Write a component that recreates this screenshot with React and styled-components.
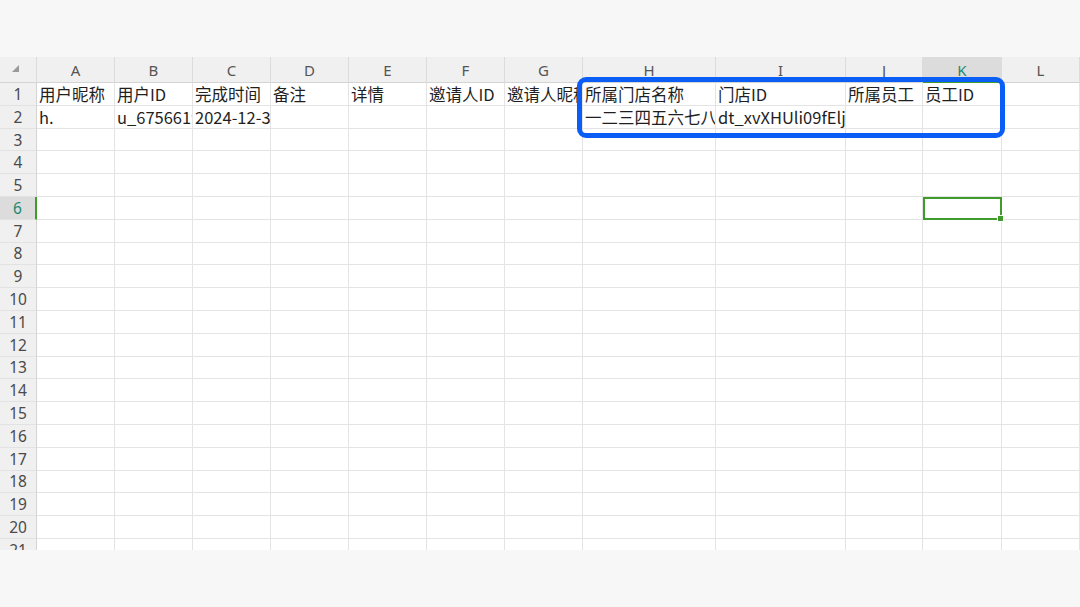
import React from 'react'
import styled, { createGlobalStyle } from 'styled-components'

const GlobalStyle = createGlobalStyle`
  html, body {
    margin: 0;
    padding: 0;
    background: #f7f7f7;
  }
  body {
    font-family: "Noto Sans CJK SC", "Noto Sans", sans-serif;
  }
`

const COLS = [
  { key: 'A', width: 78 },
  { key: 'B', width: 78 },
  { key: 'C', width: 78 },
  { key: 'D', width: 78 },
  { key: 'E', width: 78 },
  { key: 'F', width: 78 },
  { key: 'G', width: 78 },
  { key: 'H', width: 133 },
  { key: 'I', width: 130 },
  { key: 'J', width: 77 },
  { key: 'K', width: 79 },
  { key: 'L', width: 78 }
]

const DATA = {
  1: ['用户昵称', '用户ID', '完成时间', '备注', '详情', '邀请人ID', '邀请人昵称', '所属门店名称', '门店ID', '所属员工', '员工ID', ''],
  2: ['h.', 'u_67566190a1b2c', '2024-12-30 14:22:05', '', '', '', '', '一二三四五六七八九十', 'dt_xvXHUli09fEljp', '', '', '']
}

const ROW_COUNT = 21
const ROW_H = 22.8
const ACTIVE_COL = 'K'
const ACTIVE_ROW = 6

const Page = styled.div`
  padding-top: 57px;
`

const Sheet = styled.div`
  position: relative;
  height: 493px;
  overflow: hidden;
  display: grid;
  grid-template-columns: 37px ${COLS.map(c => c.width + 'px').join(' ')};
  grid-template-rows: 26px repeat(${ROW_COUNT}, ${ROW_H}px);
  background: #ffffff;
`

const Corner = styled.div`
  background: #f0f0f0;
  border-right: 1px solid #dcdcdc;
  border-bottom: 1px solid #d4d4d4;
  display: flex;
  align-items: flex-end;
  justify-content: flex-end;
  padding: 0 17px 10px 0;
  box-sizing: border-box;
`

const ColHead = styled.div`
  background: ${p => (p.$active ? '#dcdcdc' : '#f0f0f0')};
  color: ${p => (p.$active ? '#1d8a6e' : '#555')};
  border-right: 1px solid #dcdcdc;
  border-bottom: ${p => (p.$active ? '2px solid #3f9b2a' : '1px solid #d4d4d4')};
  box-sizing: border-box;
  font-family: "Noto Sans", sans-serif;
  font-size: 15px;
  display: flex;
  align-items: center;
  justify-content: center;
  padding-top: 1px;
`

const RowHead = styled.div`
  background: ${p => (p.$active ? '#dcdcdc' : '#f0f0f0')};
  color: ${p => (p.$active ? '#1d8a6e' : '#4a4a4a')};
  border-right: ${p => (p.$active ? '2px solid #3f9b2a' : '1px solid #d4d4d4')};
  border-bottom: 1px solid #e2e2e2;
  box-sizing: border-box;
  font-family: "Noto Sans", sans-serif;
  font-size: 15.5px;
  display: flex;
  align-items: center;
  justify-content: center;
`

const Cell = styled.div`
  border-right: 1px solid #e4e4e4;
  border-bottom: 1px solid #e4e4e4;
  box-sizing: border-box;
  white-space: nowrap;
  font-size: 16.5px;
  line-height: ${ROW_H - 1}px;
  color: #1f1f1f;
  padding: 1px 0 0 2px;
  position: relative;
  outline: ${p => (p.$selected ? '2px solid #3f9b2a' : 'none')};
  outline-offset: -2px;
  overflow: ${p => (p.$selected ? 'visible' : 'hidden')};
  z-index: ${p => (p.$selected ? 2 : 0)};
`

const FillHandle = styled.span`
  position: absolute;
  right: -3px;
  bottom: -3px;
  width: 5px;
  height: 5px;
  background: #3f9b2a;
  border: 1px solid #fff;
`

const Highlight = styled.div`
  position: absolute;
  left: 577px;
  top: 20px;
  width: 428px;
  height: 61px;
  box-sizing: border-box;
  border: 5px solid #0a5ef6;
  border-radius: 9px;
  pointer-events: none;
  z-index: 3;
`

function CornerMark () {
  return (
    <svg width="7" height="7" viewBox="0 0 7 7">
      <polygon points="7,0 7,7 0,7" fill="#9a9a9a" />
    </svg>
  )
}

export default function App () {
  const rows = Array.from({ length: ROW_COUNT }, (_, i) => i + 1)

  return (
    <Page>
      <GlobalStyle />
      <Sheet>
        <Corner><CornerMark /></Corner>
        {COLS.map(c => (
          <ColHead key={c.key} $active={c.key === ACTIVE_COL}>{c.key}</ColHead>
        ))}
        {rows.map(r => (
          <React.Fragment key={r}>
            <RowHead $active={r === ACTIVE_ROW}>{r}</RowHead>
            {COLS.map((c, ci) => {
              const selected = r === ACTIVE_ROW && c.key === ACTIVE_COL
              return (
                <Cell key={c.key} $selected={selected}>
                  {DATA[r] ? DATA[r][ci] : ''}
                  {selected && <FillHandle />}
                </Cell>
              )
            })}
          </React.Fragment>
        ))}
        <Highlight />
      </Sheet>
    </Page>
  )
}
